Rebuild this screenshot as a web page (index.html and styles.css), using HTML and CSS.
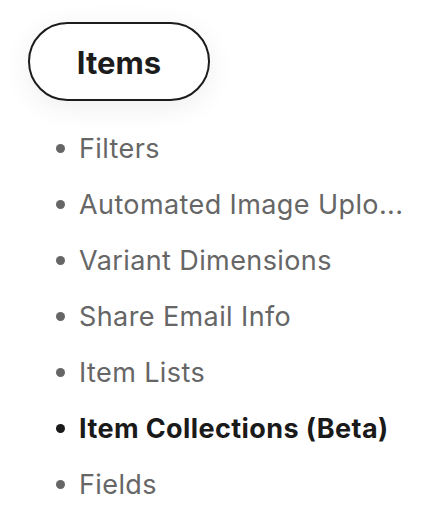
FILE: index.html
```html
<!DOCTYPE html>
<html>
<head>
<meta charset="utf-8">
<link rel="stylesheet" href="styles.css">
</head>
<body>
<div class="nav">
  <div class="pill">Items</div>
  <ul class="list">
    <li class="item"><span class="label">Filters</span></li>
    <li class="item"><span class="label">Automated Image Uplo...</span></li>
    <li class="item"><span class="label">Variant Dimensions</span></li>
    <li class="item"><span class="label">Share Email Info</span></li>
    <li class="item"><span class="label">Item Lists</span></li>
    <li class="item active"><span class="label">Item Collections (Beta)</span></li>
    <li class="item"><span class="label">Fields</span></li>
  </ul>
</div>
</body>
</html>
```

FILE: styles.css
```css
html, body {
  margin: 0;
  padding: 0;
  background: #ffffff;
}

body {
  font-family: Inter, "Noto Sans", "Liberation Sans", sans-serif;
}

.nav {
  display: flex;
  flex-direction: column;
  align-items: flex-start;
  padding: 22px 0 0 28px;
}

.pill {
  box-sizing: border-box;
  width: 182px;
  height: 79px;
  border: 2px solid #1c1c1c;
  border-radius: 40px;
  display: flex;
  align-items: center;
  justify-content: center;
  padding-top: 2px;
  font-size: 31px;
  font-weight: 700;
  color: #1c1c1c;
  background: #fff;
  box-shadow: 0 6px 28px rgba(0, 0, 0, 0.07);
}

.list {
  list-style: none;
  margin: 19px 0 0 0;
  padding: 0 0 0 28px;
  display: flex;
  flex-direction: column;
}

.item {
  height: 56px;
  display: flex;
  align-items: center;
  gap: 14px;
  font-size: 27px;
  letter-spacing: 0.4px;
  color: #666666;
}

.item::before {
  content: "";
  flex: none;
  width: 9px;
  height: 9px;
  border-radius: 50%;
  background: currentColor;
}

.label {
  white-space: nowrap;
}

.item.active {
  color: #1a1a1a;
  font-weight: 700;
}
```
